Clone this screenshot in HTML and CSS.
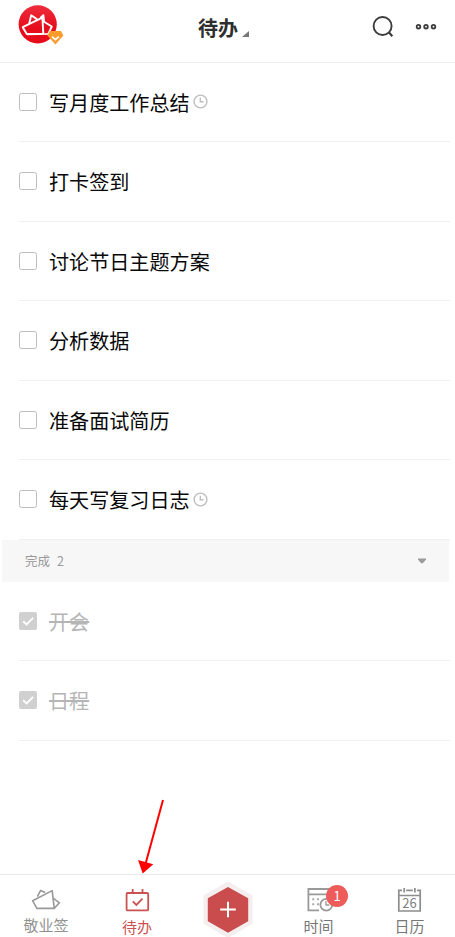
FILE: index.html
```html
<!DOCTYPE html>
<html lang="zh-CN">
<head>
<meta charset="utf-8">
<title>待办</title>
<link rel="stylesheet" href="styles.css">
</head>
<body>
<div class="app">
  <header class="header">
    <svg class="logo" width="50" height="44" viewBox="16 4 50 44">
      <defs><linearGradient id="red" x1="0" y1="0" x2="0" y2="1"><stop offset="0" stop-color="#ee2d3d"/><stop offset=".6" stop-color="#e60c1c"/></linearGradient></defs>
      <circle cx="37.7" cy="24.3" r="19.1" fill="url(#red)"/>
      <g fill="none" stroke="#fff" stroke-width="1.9" stroke-linejoin="round">
        <path d="M22.7 27.2 42.4 17.6 43.3 33.6 26.8 34.1Z"/>
        <path d="M29.2 23.4 31.2 15.3 37.2 19.4M40.3 18 43.4 15.2 44 21.8 51.8 26.5 48.3 33.9 27 34.2"/>
      </g>
      <path d="M49.8 31h11.2l2.4 4.4-8 9.2-8-9.2z" fill="#fb9b2c"/>
      <path d="M52 36.6l3.4 3.1 3.4-3.1" fill="none" stroke="#fff" stroke-width="1.6"/>
    </svg>
    <h1 class="title">待办<svg width="8" height="8" viewBox="0 0 8 8"><path d="M7 1v6H0z" fill="#777"/></svg></h1>
    <svg class="tools" width="75" height="36" viewBox="368 10 75 36">
      <g fill="none" stroke="#3c3c3e"><circle cx="382.6" cy="26" r="9" stroke-width="1.9"/><path d="M388.8 32.2l3.5 4" stroke-width="2.2"/>
      <g stroke-width="1.8"><circle cx="418.5" cy="26.7" r="1.8"/><circle cx="426" cy="26.7" r="1.8"/><circle cx="433.5" cy="26.7" r="1.8"/></g></g>
    </svg>
  </header>

  <main class="content">
    <ul class="list">
      <li class="row"><span class="box"></span><span class="text">写月度工作总结</span><svg class="clock" viewBox="0 0 15 15"><circle cx="7.5" cy="7.5" r="6.4"/><path d="M7.3 3.8V7.8H10.6"/></svg></li>
      <li class="row"><span class="box"></span><span class="text">打卡签到</span></li>
      <li class="row"><span class="box"></span><span class="text">讨论节日主题方案</span></li>
      <li class="row"><span class="box"></span><span class="text">分析数据</span></li>
      <li class="row"><span class="box"></span><span class="text">准备面试简历</span></li>
      <li class="row"><span class="box"></span><span class="text">每天写复习日志</span><svg class="clock" viewBox="0 0 15 15"><circle cx="7.5" cy="7.5" r="6.4"/><path d="M7.3 3.8V7.8H10.6"/></svg></li>
    </ul>
    <div class="section"><span class="section-name">完成</span><span class="count">2</span><svg class="caret" width="8" height="6" viewBox="0 0 8 6"><path d="M0 .5h8v1L4.8 5.2H3.2L0 1.5z" fill="#9b9b9b"/></svg></div>
    <ul class="list">
      <li class="row done"><svg class="check" viewBox="0 0 18 18"><rect width="18" height="18" rx="2" fill="#d0d0d0"/><path d="M4.2 9.3l3.4 3.2 6.5-6.7" fill="none" stroke="#fff" stroke-width="1.9"/></svg><span class="text">开会</span></li>
      <li class="row done"><svg class="check" viewBox="0 0 18 18"><rect width="18" height="18" rx="2" fill="#d0d0d0"/><path d="M4.2 9.3l3.4 3.2 6.5-6.7" fill="none" stroke="#fff" stroke-width="1.9"/></svg><span class="text">日程</span></li>
    </ul>
  </main>

  <nav class="nav">
    <a class="tab">
      <svg width="46" height="38" viewBox="23 879 46 38"><g fill="none" stroke="#999" stroke-width="1.6" stroke-linejoin="round"><path d="M32.6 900.7 52.2 890.6 54.2 908.4H36.8Z"/><path d="M37.4 896.6 40.6 890.4 45.2 892.5M53.2 898.2 59.4 902.8 54.2 908.4"/></g></svg>
      <span>敬业签</span>
    </a>
    <a class="tab active">
      <svg width="46" height="38" viewBox="114 879 46 38"><g fill="none" stroke="#ca5252" stroke-width="1.8"><rect x="126.6" y="893" width="21.6" height="17.4" rx="1"/><path d="M132.7 889v4M142.5 889v4M132.8 901.3l3.6 3.6 6.1-6.2"/></g></svg>
      <span>待办</span>
    </a>
    <a class="tab add">
      <svg width="50" height="58" viewBox="203 880 50 58"><path d="M228 881.5 252.5 895.5V923.8L228 938 203.5 923.8V895.5Z" fill="#f4eeef"/><path d="M228 887 248.2 898.3V921.2L228 932.7 207.8 921.2V898.3Z" fill="#cb4c4c"/><path d="M220.2 909.5h15.6M228 901.7v15.6" stroke="#fff" stroke-width="2"/></svg>
    </a>
    <a class="tab">
      <svg width="46" height="38" viewBox="296 879 46 38"><g fill="none" stroke="#999" stroke-width="1.8"><path d="M319 910.3H308.4V889h20.2v10M308 894.3h20"/><circle cx="326.3" cy="904.8" r="5.9" fill="#fff"/><path d="M326 901v4h3.4" stroke-width="1.3"/></g><path d="M312.2 898.3h2v2h-2zm4.8 0h2v2h-2zm-4.8 5h2v2h-2zm4.8 0h2v2h-2z" fill="#aaa"/></svg>
      <b class="badge">1</b>
      <span>时间</span>
    </a>
    <a class="tab">
      <svg width="46" height="38" viewBox="387 879 46 38"><g fill="none" stroke="#8d8d8d" stroke-width="1.7"><path d="M402 890.3h-3.2V911h21.4v-20.7H417M406.2 890.3h6.6M399 895.5h21M404.2 888v4.6M414.9 888v4.6"/></g><text x="409.5" y="908" text-anchor="middle" class="day">26</text></svg>
      <span>日历</span>
    </a>
  </nav>
  <svg class="arrow" width="32" height="80" viewBox="135 796 32 80"><path d="M163 800 145.5 864" stroke="#f00" stroke-width="2"/><path d="M138 860 153.3 864.2 142.7 873.5Z" fill="#f00"/></svg>
</div>
</body>
</html>
```
FILE: styles.css
```css
* { box-sizing: border-box; }
body {
  margin: 0;
  background: #fff;
  font-family: "Noto Sans CJK SC", "Noto Sans", sans-serif;
}
svg { display: block; flex: none; }
.app {
  position: relative;
  display: flex;
  flex-direction: column;
  width: 455px;
  height: 937px;
  overflow: hidden;
}
.header {
  display: grid;
  grid-template-columns: 1fr auto 1fr;
  height: 63px;
  border-bottom: 1px solid #ededed;
}
.logo { margin: 4px 0 0 16px; }
.title {
  display: flex;
  align-items: flex-end;
  gap: 4px;
  height: 38px;
  margin: 0;
  padding-right: 7px;
  font-size: 20px;
  line-height: 21px;
  font-weight: 700;
  color: #2e2e2e;
}
.tools { justify-self: end; margin: 10px 12px 0 0; }
.content { flex: 1; min-height: 0; }
.list { margin: 0; padding: 0 5px 0 19px; list-style: none; }
.list:first-child { margin-top: -0.5px; }
.row {
  display: flex;
  align-items: center;
  height: 79.5px;
  border-bottom: 1px solid #f0f0f0;
}
.box {
  width: 18px;
  height: 18px;
  margin-left: -0.5px;
  border: 1.5px solid #bdbdbd;
  border-radius: 2.5px;
}
.check { width: 18px; height: 18px; margin-left: -0.5px; }
.text {
  margin-left: 12.5px;
  padding-top: 2px;
  font-size: 20.1px;
  line-height: 28px;
  color: #080808;
}
.clock {
  width: 15px;
  height: 15px;
  margin-left: 3.3px;
  fill: none;
  stroke: #bebebe;
  stroke-width: 1.4;
}
.done .text { color: #b5b5b5; text-decoration: line-through; }
.section {
  display: flex;
  align-items: center;
  height: 42px;
  margin: 0 6px 0 2px;
  padding: 0 23px;
  background: #f7f7f7;
  font-size: 12.5px;
  color: #999;
}
.count { margin-left: 7px; }
.caret { margin-left: auto; }
.nav {
  display: grid;
  grid-template-columns: repeat(5, 1fr);
  height: 63px;
  border-top: 1px solid #e9e9e9;
}
.tab {
  position: relative;
  display: flex;
  flex-direction: column;
  align-items: center;
  padding-top: 4px;
  font-size: 15px;
  line-height: 18px;
  color: #777;
}
.tab:first-child { color: #919191; line-height: 16px; }
.tab:first-child span { padding-left: 1px; }
.tab.active { color: #ca5252; line-height: 19px; }
.tab.active span { padding-left: 1px; }
.add { padding-top: 5px; }
.badge {
  position: absolute;
  top: 10px;
  left: 53px;
  width: 22px;
  height: 22px;
  border-radius: 50%;
  background: #ee5b5b;
  color: #fff;
  font-size: 13px;
  font-weight: 400;
  line-height: 22px;
  text-align: center;
}
.day { font-size: 13px; fill: #808080; }
.arrow { position: absolute; left: 135px; top: 796px; }
```
